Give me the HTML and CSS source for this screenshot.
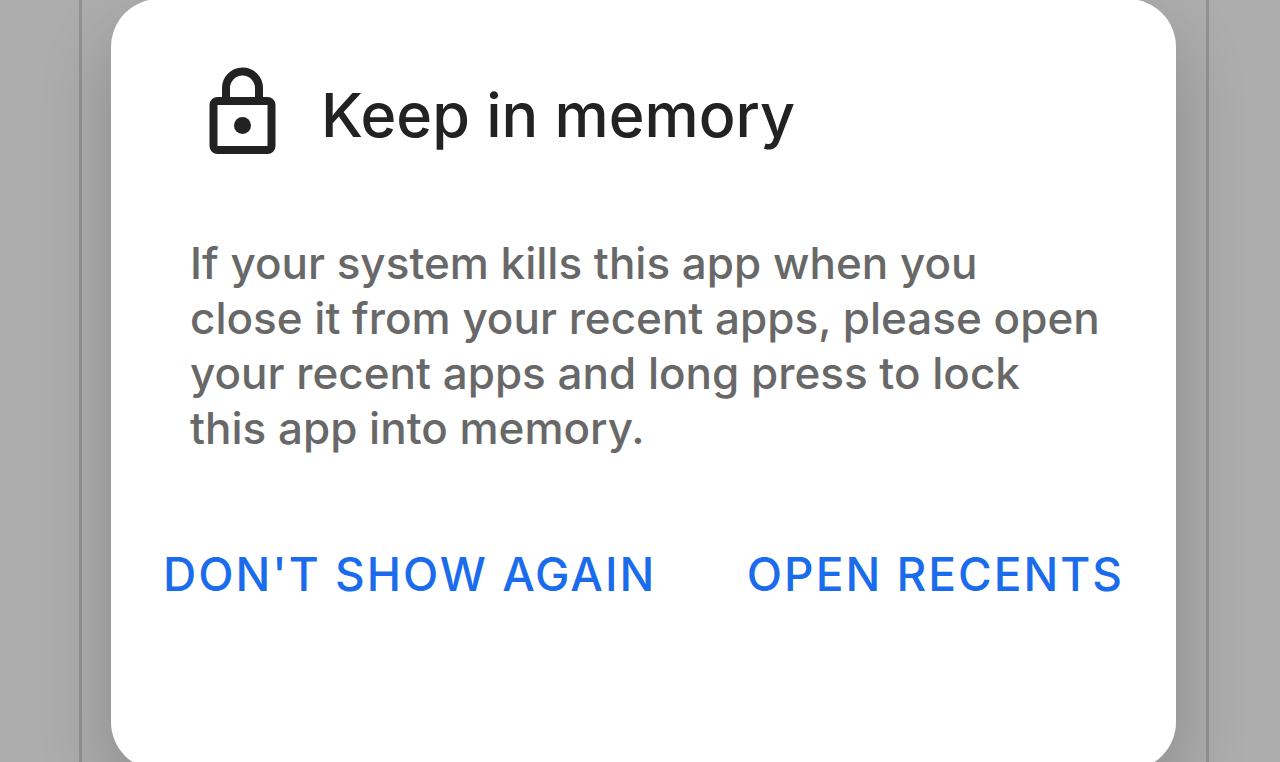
FILE: index.html
```html
<!DOCTYPE html>
<html lang="en">
<head>
    <meta charset="UTF-8">
    <meta name="viewport" content="width=device-width, initial-scale=1.0">
    <title>Keep in memory</title>
    <link rel="stylesheet" href="styles.css">
</head>
<body>
    <div class="screen">
        <div class="dialog" role="dialog" aria-labelledby="dialog-title">
            <div class="dialog-header">
                <svg class="lock-icon" viewBox="0 0 68 88" aria-hidden="true">
                    <path d="M17 32V21a16.500 16.500 0 0 1 33 0V32" fill="none" stroke="#222222" stroke-width="8"/>
                    <rect x="4.500" y="34" width="58" height="49" rx="4" fill="none" stroke="#222222" stroke-width="8"/>
                    <circle cx="33.500" cy="58.500" r="8.500" fill="#222222"/>
                </svg>
                <h1 id="dialog-title">Keep in memory</h1>
            </div>
            <p class="message">
                If your system kills this app when you<br>
                close it from your recent apps, please open<br>
                your recent apps and long press to lock<br>
                this app into memory.
            </p>
            <div class="actions">
                <button type="button">DON'T SHOW AGAIN</button>
                <button type="button">OPEN RECENTS</button>
            </div>
        </div>
    </div>
</body>
</html>
```
FILE: styles.css
```css
body {
    font-family: Inter, Roboto, sans-serif;
    background-color: #adadad;
    margin: 0;
    height: 100vh;
    overflow: hidden;
}

/* page behind the dialog */
.screen {
    margin: 0 71px 0 79px;
    padding: 0 30px 0 29px;
    border-left: 3px solid #929292;
    border-right: 3px solid #929292;
}

.dialog {
    margin-top: -1px;
    padding: 68px 48px 164px;
    border-radius: 48px;
    background-color: #ffffff;
    box-shadow: 0 32px 72px rgba(0, 0, 0, 0.2);
}

.dialog-header {
    display: flex;
    align-items: center;
    gap: 44px;
    padding-left: 50px;
}

.lock-icon {
    width: 68px;
    height: 88px;
}

h1 {
    margin: 0;
    padding-top: 8px;
    font-size: 61px;
    font-weight: 500;
    line-height: 80px;
    color: #222222;
}

.message {
    margin: 81px 0 0;
    padding: 0 16px 0 31px;
    font-size: 44px;
    font-weight: 500;
    line-height: 55px;
    color: #686868;
}

.actions {
    display: flex;
    justify-content: space-between;
    margin-top: 86px;
}

button {
    padding: 4px;
    border: none;
    background: none;
    font-family: inherit;
    font-size: 46px;
    font-weight: 500;
    line-height: 56px;
    letter-spacing: 2px;
    color: #1a6cec;
    cursor: pointer;
}
```
